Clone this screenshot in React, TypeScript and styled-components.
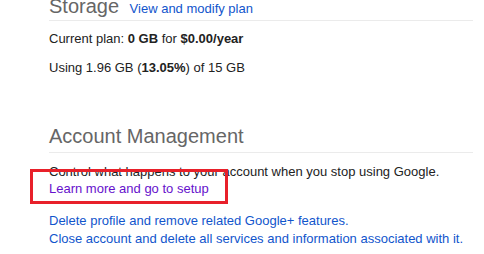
import React from 'react';
import styled, { createGlobalStyle } from 'styled-components';

const GlobalStyle = createGlobalStyle`
  body {
    margin: 0;
    background: #fff;
    font-family: Arial, "Liberation Sans", sans-serif;
    overflow: hidden;
  }
`;

const Page = styled.div`
  padding-left: 49px;
  width: 424px;
`;

const Section = styled.section<{ $top: number }>`
  margin-top: ${p => p.$top}px;
`;

const Heading = styled.div<{ $pad: number }>`
  font-size: 20px;
  line-height: 24px;
  color: #666;
  padding-bottom: ${p => p.$pad}px;
  border-bottom: 1px solid #ebebeb;
`;

const HeadLink = styled.a`
  margin-left: 5px;
  font-size: 13px;
  line-height: 17px;
  color: #15c;
  text-decoration: none;
`;

const Para = styled.p<{ $top: number }>`
  margin: ${p => p.$top}px 0 0;
  font-size: 13px;
  line-height: 17px;
  color: #222;
`;

const Link = styled.a<{ $visited?: boolean }>`
  color: ${p => (p.$visited ? '#61c' : '#15c')};
  text-decoration: none;
`;

const Marked = styled.span`
  position: relative;
  display: inline-block;
`;

const Highlight = styled.span`
  position: absolute;
  left: -19px;
  top: -11px;
  width: 192px;
  height: 29px;
  border: 3px solid #e8202a;
  pointer-events: none;
`;

const Links = styled.div`
  margin-top: 15px;
  display: flex;
  flex-direction: column;
  font-size: 13px;
  line-height: 18px;
`;

export default function App() {
  return (
    <>
      <GlobalStyle />
      <Page>
        <Section $top={-6}>
          <Heading $pad={2}>
            Storage <HeadLink href="#">View and modify plan</HeadLink>
          </Heading>
          <Para $top={9}>
            Current plan: <b>0 GB</b> for <b>$0.00/year</b>
          </Para>
          <Para $top={12}>
            Using 1.96 GB (<b>13.05%</b>) of 15 GB
          </Para>
        </Section>
        <Section $top={48}>
          <Heading $pad={4}>Account Management</Heading>
          <Para $top={10}>
            Control what happens to your account when you stop using Google.
            <br />
            <Marked>
              <Link $visited href="#">Learn more and go to setup</Link>
              <Highlight />
            </Marked>
          </Para>
          <Links>
            <Link href="#">Delete profile and remove related Google+ features.</Link>
            <Link href="#">Close account and delete all services and information associated with it.</Link>
          </Links>
        </Section>
      </Page>
    </>
  );
}
